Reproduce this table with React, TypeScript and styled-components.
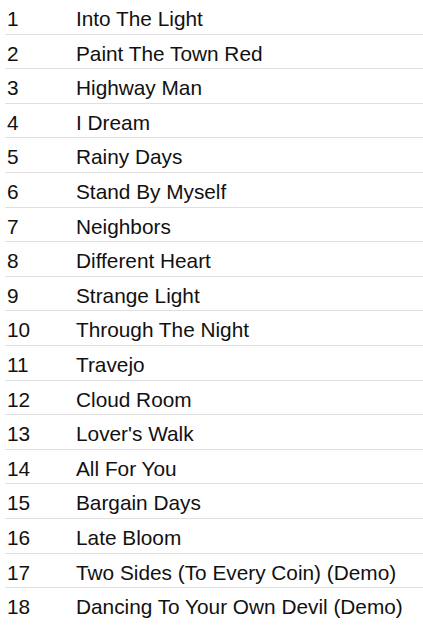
import React from "react";
import styled, { createGlobalStyle } from "styled-components";

const GlobalStyle = createGlobalStyle`
  body {
    margin: 0;
    background: #fff;
    font-family: "Liberation Sans", Arial, sans-serif;
  }
`;

const TrackList = styled.ol`
  list-style: none;
  margin: 0;
  padding: 0 0 0 5px;
  width: 418px;
`;

const Track = styled.li`
  display: grid;
  grid-template-columns: 69px 1fr;
  align-items: start;
  box-sizing: border-box;
  height: 34.6px;
  padding: 7px 0 0 2px;
  border-bottom: 1.5px solid #e0e0e0;
  font-size: 20.8px;
  line-height: 24px;
  color: #111;
  white-space: nowrap;

  &:last-child {
    border-bottom: none;
  }
`;

const Num = styled.span`
  font-variant-numeric: tabular-nums;
`;

const Title = styled.span``;

const tracks = [
  "Into The Light",
  "Paint The Town Red",
  "Highway Man",
  "I Dream",
  "Rainy Days",
  "Stand By Myself",
  "Neighbors",
  "Different Heart",
  "Strange Light",
  "Through The Night",
  "Travejo",
  "Cloud Room",
  "Lover's Walk",
  "All For You",
  "Bargain Days",
  "Late Bloom",
  "Two Sides (To Every Coin) (Demo)",
  "Dancing To Your Own Devil (Demo)",
];

const App = () => {
  return (
    <>
      <GlobalStyle />
      <TrackList>
        {tracks.map((title, i) => (
          <Track key={title}>
            <Num>{i + 1}</Num>
            <Title>{title}</Title>
          </Track>
        ))}
      </TrackList>
    </>
  );
};

export default App;
